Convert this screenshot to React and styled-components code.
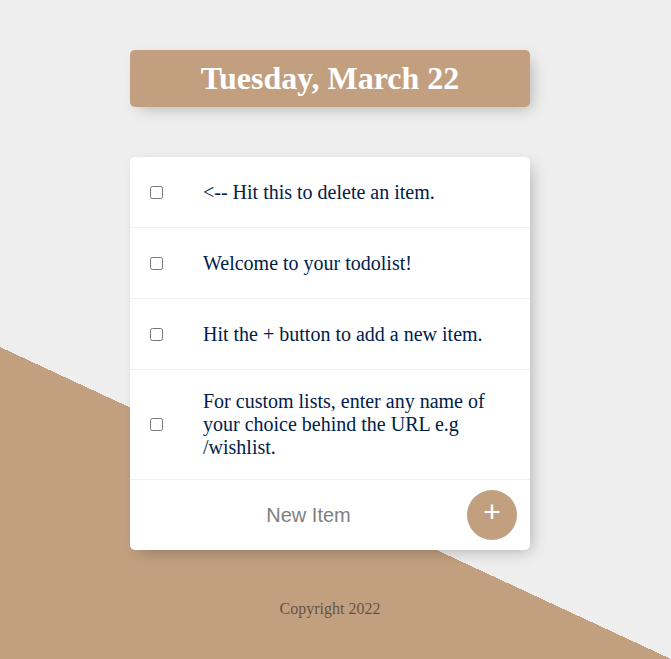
import styled, { createGlobalStyle } from "styled-components";

const TAN = "#c19f7f";

const GlobalStyle = createGlobalStyle`
  html {
    height: 100%;
    background:
      linear-gradient(to top right, ${TAN} 50%, #eeeeee 50%) bottom / 100% 312px no-repeat,
      #eeeeee;
  }
  body {
    margin: 0;
    padding: 0;
    font-family: "Liberation Serif", "Times New Roman", serif;
  }
`;

const Page = styled.div`
  width: 660px;
  overflow: hidden;
`;

const Box = styled.div`
  max-width: 400px;
  margin: 50px auto;
  background: ${({ $heading }) => ($heading ? TAN : "white")};
  border-radius: 5px;
  box-shadow: 5px 5px 15px -5px rgba(0, 0, 0, 0.3);
  text-align: ${({ $heading }) => ($heading ? "center" : "left")};
`;

const Title = styled.h1`
  margin: 0;
  padding: 10px;
  color: #fff;
  font-size: 32px;
  font-weight: bold;
`;

const Item = styled.div`
  min-height: 70px;
  display: flex;
  align-items: center;
  border-bottom: 1px solid #f1f1f1;

  &:last-child {
    border-bottom: 0;
  }
`;

const Check = styled.input`
  margin: 20px;
  width: 13px;
  height: 13px;
  flex-shrink: 0;
`;

const Text = styled.p`
  margin: 0;
  padding: 20px;
  font-size: 20px;
  font-weight: 200;
  color: #00204a;
`;

const Form = styled.form`
  display: flex;
  align-items: center;
  margin-left: 20px;
`;

const NewItem = styled.input`
  text-align: center;
  height: 60px;
  border: none;
  padding: 1px 2px;
  font-family: "Liberation Sans", Arial, sans-serif;
  font-size: 20px;
  font-weight: 200;
  width: 313px;
  outline: none;

  &::placeholder {
    color: grey;
    opacity: 1;
  }
`;

const AddButton = styled.button`
  height: 50px;
  width: 50px;
  border-radius: 50%;
  border: 0;
  background-color: ${TAN};
  color: #fff;
  font-family: "Liberation Sans", Arial, sans-serif;
  font-size: 30px;
  padding: 0 0 6px;
  line-height: 1;
  cursor: pointer;
`;

const Footer = styled.footer`
  color: rgba(0, 0, 0, 0.5);
  text-align: center;
  font-size: 16px;
`;

const items = [
  "<-- Hit this to delete an item.",
  "Welcome to your todolist!",
  "Hit the + button to add a new item.",
  "For custom lists, enter any name of your choice behind the URL e.g /wishlist.",
];

export default function App() {
  return (
    <Page>
      <GlobalStyle />
      <Box $heading>
        <Title>Tuesday, March 22</Title>
      </Box>
      <Box>
        {items.map((t) => (
          <Item key={t}>
            <Check type="checkbox" />
            <Text>{t}</Text>
          </Item>
        ))}
        <Item>
          <Form onSubmit={(e) => e.preventDefault()}>
            <NewItem type="text" placeholder="New Item" autoComplete="off" />
            <AddButton type="submit">+</AddButton>
          </Form>
        </Item>
      </Box>
      <Footer>Copyright 2022</Footer>
    </Page>
  );
}
